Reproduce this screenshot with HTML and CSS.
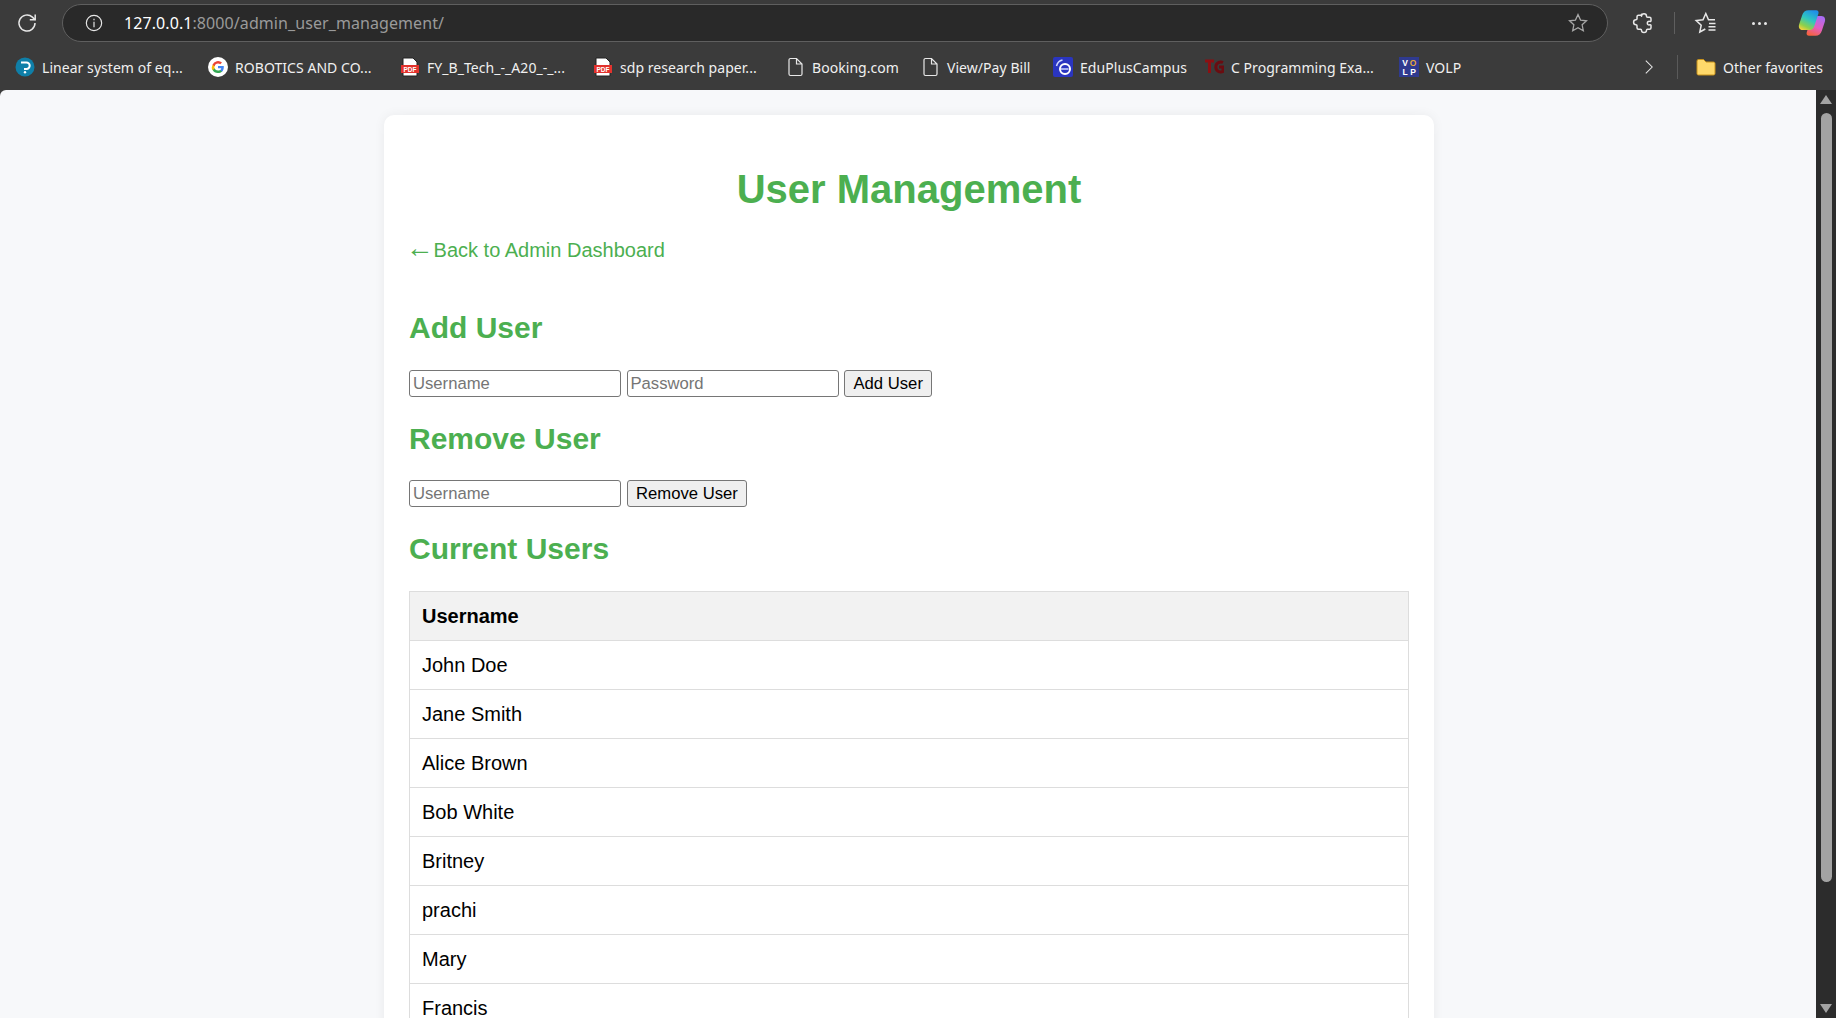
FILE: index.html
```html
<!DOCTYPE html>
<html>

<head>
    <meta name="viewport" content="width=device-width, initial-scale=1">
    <title>User Management</title>
    <meta charset="UTF-8">
    <link rel="stylesheet" href="styles.css">
</head>

<body>

    <div class="browser">
        <div class="toolbar">
            <svg class="tool_icon reload" viewBox="0 0 24 24" fill="none" stroke="#e8e8e8" stroke-width="1.5">
                <path d="M20 12a8 8 0 1 1-2.6-5.9L20 8.6" />
                <path d="M20.2 3.4v5.4h-5.4" />
            </svg>
            <div class="address">
                <svg class="info_icon" viewBox="0 0 24 24" fill="none" stroke="#e8e8e8" stroke-width="1.4">
                    <circle cx="12" cy="12" r="9.2" />
                    <path d="M12 10.5v6.5M12 7v1.6" />
                </svg>
                <span class="url"><span class="host">127.0.0.1</span>:8000/admin_user_management/</span>
                <svg class="star_icon" viewBox="0 0 24 24" fill="none" stroke="#a8a8a8" stroke-width="1.4">
                    <path d="M12 2.8l2.8 6 6.5.8-4.8 4.4 1.3 6.4-5.8-3.2-5.8 3.2 1.3-6.4-4.8-4.4 6.5-.8z" />
                </svg>
            </div>
            <svg class="tool_icon ext" viewBox="0 0 24 24" fill="none" stroke="#e8e8e8" stroke-width="1.5"
                stroke-linejoin="round">
                <path d="M9.5 5.2c0-3.2 5-3.2 5 0 0 .7.4 1 1 1h2a1.5 1.5 0 0 1 1.5 1.5v2c0 .6-.6.9-1.2.7-3-1-3.600 4.200 0 3.400.6-.1 1.200.1 1.200.7v2.300a1.5 1.5 0 0 1-1.5 1.500h-2c-.6 0-1 .3-1 1 0 3-5 3-5 0 0-.7-.4-1-1-1h-2a1.500 1.500 0 0 1-1.500-1.500v-2c0-.6-.4-1-1-1-3.200 0-3.200-5 0-5 .6 0 1-.4 1-1v-2a1.500 1.500 0 0 1 1.500-1.500h2c.6 0 1-.3 1-1z" />
            </svg>
            <span class="tool_sep"></span>
            <svg class="tool_icon fav" viewBox="0 0 24 24" fill="none" stroke="#e8e8e8" stroke-width="1.5">
                <path d="M21 8.800h-6.500L11.800 2.500 9 8.800l-6.800.8 5 4.600-1.400 6.800 5.500-3" />
                <path d="M15 12.500h6.500M14.500 15.800h7M14.500 19h7" />
            </svg>
            <div class="dots"><span></span><span></span><span></span></div>
            <svg class="copilot" viewBox="0 0 24 24">
                <defs>
                    <linearGradient id="cop_a" x1="0.7" y1="0" x2="0.2" y2="1">
                        <stop offset="0" stop-color="#1f8fe8" />
                        <stop offset="0.45" stop-color="#2fc7c0" />
                        <stop offset="0.8" stop-color="#8fd04a" />
                        <stop offset="1" stop-color="#f5d13c" />
                    </linearGradient>
                    <linearGradient id="cop_b" x1="0.7" y1="0" x2="0.3" y2="1">
                        <stop offset="0" stop-color="#a86cf5" />
                        <stop offset="0.55" stop-color="#e35fc0" />
                        <stop offset="1" stop-color="#f7623f" />
                    </linearGradient>
                </defs>
                <path fill="url(#cop_b)" d="M15 6h5c2.800 0 3.800 2.500 3 5l-2.500 7.500c-.8 3-2.800 4.500-5.500 4.500H9.500c-1.800 0-2.500-1.500-2-3L11 9.500C11.700 7.300 13 6 15 6z" />
                <path fill="url(#cop_a)" d="M9 1h6.500c1.800 0 2.500 1.500 2 3L14 14.500c-.7 2.200-2 3.500-4 3.500H4c-2.800 0-3.800-2.500-3-5l2.500-7.500C4.300 2.500 6.300 1 9 1z" />
            </svg>
        </div>

        <div class="bookmarks">
            <a class="mark" style="width: 193px;">
                <svg class="mark_icon" viewBox="0 0 20 20">
                    <circle cx="10" cy="10" r="9.500" fill="#0f7fa8" />
                    <path d="M6 5.500h5.500a3.200 3.200 0 0 1 0 6.400H10V13" fill="none" stroke="#fff" stroke-width="2" />
                    <circle cx="10" cy="15.300" r="1.200" fill="#fff" />
                </svg>
                Linear system of eq...
            </a>
            <a class="mark" style="width: 192px;">
                <svg class="mark_icon" viewBox="0 0 20 20">
                    <circle cx="10" cy="10" r="10" fill="#fff" />
                    <path d="M15.800 10.200c0-.5 0-.9-.1-1.300H10v2.400h3.300a2.800 2.800 0 0 1-1.200 1.900v1.500h2c1.100-1.100 1.700-2.600 1.700-4.500z" fill="#4285f4" />
                    <path d="M10 16c1.600 0 3-.5 4-1.500l-2-1.500c-.5.400-1.200.6-2 .6a3.600 3.600 0 0 1-3.400-2.400H4.500v1.600A6 6 0 0 0 10 16z" fill="#34a853" />
                    <path d="M6.600 11.700a3.500 3.500 0 0 1 0-2.400V7.700H4.500a6 6 0 0 0 0 5.500z" fill="#fbbc05" />
                    <path d="M10 6.400c.9 0 1.700.3 2.300.9l1.700-1.700A6 6 0 0 0 4.500 7.700l2.100 1.600A3.600 3.600 0 0 1 10 6.400z" fill="#ea4335" />
                </svg>
                ROBOTICS AND CO...
            </a>
            <a class="mark" style="width: 193px;">
                <svg class="mark_icon" viewBox="0 0 20 20">
                    <path d="M3 1h10l4 4v14H3z" fill="#fff" stroke="#222" />
                    <rect x="1" y="8" width="18" height="8" fill="#e2322d" />
                    <text x="10" y="14.500" class="pdf_text">PDF</text>
                </svg>
                FY_B_Tech_-_A20_-_...
            </a>
            <a class="mark" style="width: 192px;">
                <svg class="mark_icon" viewBox="0 0 20 20">
                    <path d="M3 1h10l4 4v14H3z" fill="#fff" stroke="#222" />
                    <rect x="1" y="8" width="18" height="8" fill="#e2322d" />
                    <text x="10" y="14.500" class="pdf_text">PDF</text>
                </svg>
                sdp research paper...
            </a>
            <a class="mark" style="width: 135px;">
                <svg class="mark_icon" viewBox="0 0 20 20" fill="none" stroke="#e8e8e8" stroke-width="1.200">
                    <path d="M4 3a1.500 1.500 0 0 1 1.500-1.500h6L17 7v10a1.500 1.500 0 0 1-1.500 1.500h-10A1.500 1.500 0 0 1 4 17zM11.500 1.500V7H17" />
                </svg>
                Booking.com
            </a>
            <a class="mark" style="width: 133px;">
                <svg class="mark_icon" viewBox="0 0 20 20" fill="none" stroke="#e8e8e8" stroke-width="1.200">
                    <path d="M4 3a1.500 1.500 0 0 1 1.500-1.500h6L17 7v10a1.500 1.500 0 0 1-1.500 1.500h-10A1.500 1.500 0 0 1 4 17zM11.500 1.500V7H17" />
                </svg>
                View/Pay Bill
            </a>
            <a class="mark" style="width: 151px;">
                <svg class="mark_icon" viewBox="0 0 20 20">
                    <rect width="20" height="20" rx="2" fill="#2a35c0" />
                    <circle cx="12" cy="12" r="5" fill="none" stroke="#fff" stroke-width="2" />
                    <path d="M7.500 12h8M3.500 9a8 8 0 0 1 6-6" fill="none" stroke="#cfd6ff" stroke-width="1.500" />
                </svg>
                EduPlusCampus
            </a>
            <a class="mark" style="width: 195px;">
                <svg class="mark_icon" viewBox="0 0 20 20">
                    <path d="M1 4h9M5.500 4v12" fill="none" stroke="#8c0f12" stroke-width="3" />
                    <path d="M19 5.500a5 5 0 1 0 0 9V10h-4" fill="none" stroke="#6b0c10" stroke-width="3" />
                </svg>
                C Programming Exa...
            </a>
            <a class="mark" style="width: 90px;">
                <svg class="mark_icon" viewBox="0 0 20 20">
                    <rect width="20" height="20" fill="#2f3a8f" />
                    <text x="6" y="9" class="volp_text">V</text>
                    <text x="14" y="9" class="volp_o">O</text>
                    <text x="6" y="18" class="volp_text">L</text>
                    <text x="14" y="18" class="volp_text">P</text>
                </svg>
                VOLP
            </a>
            <svg class="more_icon" viewBox="0 0 12 20" fill="none" stroke="#e8e8e8" stroke-width="1.300">
                <path d="M2 2l8 8-8 8" />
            </svg>
            <span class="mark_sep"></span>
            <a class="mark other">
                <svg class="mark_icon" viewBox="0 0 20 20">
                    <path d="M1 4a1.500 1.500 0 0 1 1.500-1.500h5L10 5h7.500A1.500 1.500 0 0 1 19 6.500v10a1.500 1.500 0 0 1-1.500 1.500h-15A1.500 1.500 0 0 1 1 16.500z" fill="#ffd96b" stroke="#c8921a" />
                </svg>
                Other favorites
            </a>
        </div>

        <div class="viewport">
            <div class="page">
                <div class="container">
                    <h1>User Management</h1>
                    <a class="back_link" href="#"><span class="back_arrow">←</span>Back to Admin Dashboard</a>

                    <h2>Add User</h2>
                    <form class="user_form">
                        <input type="text" placeholder="Username">
                        <input type="password" placeholder="Password">
                        <button type="button">Add User</button>
                    </form>

                    <h2>Remove User</h2>
                    <form class="user_form">
                        <input type="text" placeholder="Username">
                        <button type="button">Remove User</button>
                    </form>

                    <h2>Current Users</h2>
                    <table>
                        <tr>
                            <th>Username</th>
                        </tr>
                        <tr>
                            <td>John Doe</td>
                        </tr>
                        <tr>
                            <td>Jane Smith</td>
                        </tr>
                        <tr>
                            <td>Alice Brown</td>
                        </tr>
                        <tr>
                            <td>Bob White</td>
                        </tr>
                        <tr>
                            <td>Britney</td>
                        </tr>
                        <tr>
                            <td>prachi</td>
                        </tr>
                        <tr>
                            <td>Mary</td>
                        </tr>
                        <tr>
                            <td>Francis</td>
                        </tr>
                    </table>
                </div>
            </div>
            <div class="scrollbar">
                <span class="arrow_up"></span>
                <span class="thumb"></span>
                <span class="arrow_down"></span>
            </div>
        </div>
    </div>

</body>

</html>
```

FILE: styles.css
```css
html,
body {
    margin: 0;
    height: 100%;
    overflow: hidden;
}

body {
    font-family: "Liberation Sans", Arial, sans-serif;
    background-color: #3b3b3b;
}

.browser {
    display: flex;
    flex-direction: column;
    height: 1018px;
}

/* Browser toolbar */
.toolbar {
    display: flex;
    align-items: center;
    height: 46px;
    flex: none;
}

.tool_icon {
    width: 24px;
    height: 24px;
    flex: none;
}

.reload {
    margin: 0 23px 0 15px;
}

.address {
    display: flex;
    align-items: center;
    width: 1546px;
    height: 38px;
    margin-right: 24px;
    padding: 0 18px 0 21px;
    box-sizing: border-box;
    flex: none;
    background-color: #292929;
    border: 1px solid #5f5f5f;
    border-radius: 19px;
}

.info_icon {
    width: 20px;
    height: 20px;
    flex: none;
}

.url {
    flex: 1;
    margin-left: 20px;
    color: #9a9a9a;
    font-family: "Noto Sans", sans-serif;
    font-size: 16px;
    letter-spacing: 0.08px;
}

.host {
    color: #fff;
}

.star_icon {
    width: 22px;
    height: 22px;
    flex: none;
}

.tool_sep {
    width: 1px;
    height: 22px;
    margin: 0 19px 0 18px;
    background-color: #5f5f5f;
}

.fav {
    margin-right: 34px;
}

.dots {
    display: flex;
    gap: 3px;
    margin-right: 31px;
}

.dots span {
    width: 3px;
    height: 3px;
    border-radius: 50%;
    background-color: #e8e8e8;
}

.copilot {
    width: 28px;
    height: 28px;
    flex: none;
}

/* Favorites bar */
.bookmarks {
    display: flex;
    align-items: center;
    height: 44px;
    padding: 0 0 2px 15px;
    box-sizing: border-box;
    flex: none;
}

.mark {
    display: flex;
    align-items: center;
    gap: 7px;
    flex: none;
    color: #f0f0f0;
    font-family: "Noto Sans", sans-serif;
    font-size: 14px;
    letter-spacing: 0.05px;
    white-space: nowrap;
}

.mark_icon {
    width: 20px;
    height: 20px;
    flex: none;
}

.pdf_text {
    fill: #fff;
    font-family: "Liberation Sans", sans-serif;
    font-size: 6.5px;
    font-weight: bold;
    text-anchor: middle;
}

.volp_text,
.volp_o {
    fill: #fff;
    font-family: "Liberation Sans", sans-serif;
    font-size: 8.5px;
    font-weight: bold;
    text-anchor: middle;
}

.volp_o {
    fill: #e8a63a;
}

.more_icon {
    width: 10px;
    height: 16px;
    margin-left: 155px;
    flex: none;
}

.mark_sep {
    width: 1px;
    height: 24px;
    margin: 0 18px 0 23px;
    background-color: #5a5a5a;
}

/* Page area */
.viewport {
    display: flex;
    flex: 1;
    min-height: 0;
}

.page {
    flex: 1;
    min-width: 0;
    overflow: hidden;
    padding: 25px 0 0 2px;
    background-color: #f7f8fa;
    border-top-left-radius: 6px;
}

.container {
    width: 1050px;
    margin: 0 auto;
    padding: 25px;
    box-sizing: border-box;
    background-color: #fff;
    border-radius: 10px;
    box-shadow: 0 0 12px rgba(0, 0, 0, 0.06);
}

h1 {
    margin: 27px 0 27px;
    color: #4caf50;
    font-size: 40px;
    text-align: center;
}

.back_link {
    display: block;
    color: #4caf50;
    font-size: 20px;
    text-decoration: none;
}

.back_arrow {
    margin-left: -3px;
    font-size: 27.6px;
    line-height: 0;
}

h2 {
    margin: 25px 0 24px;
    color: #4caf50;
    font-size: 30px;
}

.back_link + h2 {
    margin: 49px 0 25px;
}

.user_form {
    display: flex;
    align-items: stretch;
    gap: 5.5px;
    margin-bottom: 20px;
}

input {
    width: 212px;
    height: 27px;
    padding: 0 3px;
    box-sizing: border-box;
    border: 1px solid #767676;
    border-radius: 3px;
    font-family: "Liberation Sans", sans-serif;
    font-size: 16.67px;
}

input::placeholder {
    color: #757575;
}

button {
    height: 27px;
    padding: 0 8.5px;
    border: 1px solid #767676;
    border-radius: 3px;
    background-color: #efefef;
    color: #000;
    font-family: "Liberation Sans", sans-serif;
    font-size: 16.67px;
}

table {
    width: 100%;
    margin-top: 25px;
    border-collapse: collapse;
    font-size: 20px;
}

th,
td {
    height: 49px;
    padding: 0 12px;
    box-sizing: border-box;
    border: 1px solid #ddd;
    text-align: left;
}

th {
    background-color: #f2f2f2;
}

/* Scrollbar */
.scrollbar {
    display: flex;
    flex-direction: column;
    align-items: center;
    width: 20px;
    flex: none;
    background-color: #2c2c2c;
}

.arrow_up,
.arrow_down {
    width: 0;
    height: 0;
    flex: none;
    border-left: 6px solid transparent;
    border-right: 6px solid transparent;
}

.arrow_up {
    margin-top: 5px;
    border-bottom: 9px solid #a3a3a3;
}

.arrow_down {
    margin-bottom: 5px;
    border-top: 9px solid #a3a3a3;
}

.thumb {
    width: 11px;
    height: 769px;
    margin: 9px 0 auto;
    border-radius: 6px;
    background-color: #a3a3a3;
}
```
